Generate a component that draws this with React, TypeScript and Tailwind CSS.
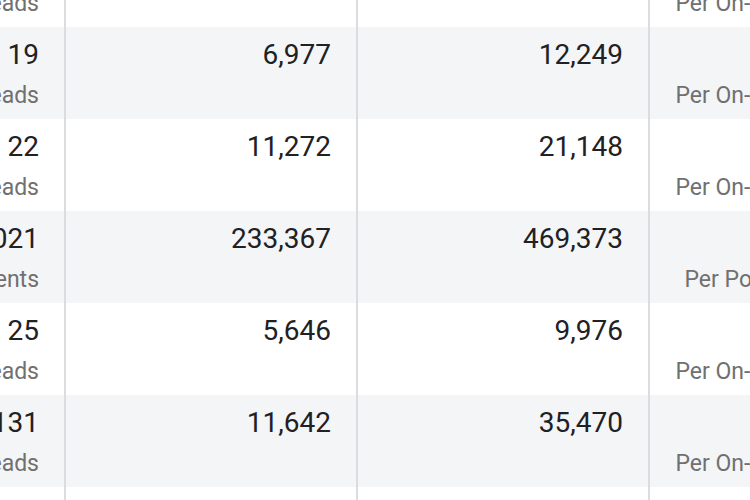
import React from "react";

type Row = { a: string; aLabel: string; b: string; c: string; d: string; dLabel: string };

const rows: Row[] = [
  { a: "18", aLabel: "On-Facebook Leads", b: "4,210", c: "8,733", d: "$0.00", dLabel: "Per On-Facebook Lead" },
  { a: "19", aLabel: "On-Facebook Leads", b: "6,977", c: "12,249", d: "$0.00", dLabel: "Per On-Facebook Lead" },
  { a: "22", aLabel: "On-Facebook Leads", b: "11,272", c: "21,148", d: "$0.00", dLabel: "Per On-Facebook Lead" },
  { a: "2021", aLabel: "Post Engagements", b: "233,367", c: "469,373", d: "$0.00", dLabel: "Per Post Engagement" },
  { a: "25", aLabel: "On-Facebook Leads", b: "5,646", c: "9,976", d: "$0.00", dLabel: "Per On-Facebook Lead" },
  { a: "1131", aLabel: "On-Facebook Leads", b: "11,642", c: "35,470", d: "$0.00", dLabel: "Per On-Facebook Lead" },
  { a: "20", aLabel: "On-Facebook Leads", b: "7,105", c: "13,902", d: "$0.00", dLabel: "Per On-Facebook Lead" },
];

function Cell({ top, bottom, className }: { top?: string; bottom?: string; className: string }) {
  return (
    <div className={`flex flex-col items-end justify-start whitespace-nowrap pt-[12px] pr-[25px] ${className}`}>
      <div className="flex justify-end w-full h-[32px] text-[28px] leading-[32px] text-[#202124]">{top}</div>
      <div className="flex justify-end w-full mt-[11px] h-[28px] text-[23px] leading-[28px] text-[#707070]">{bottom}</div>
    </div>
  );
}

export default function App() {
  return (
    <div
      className="w-[750px] h-[500px] overflow-hidden bg-white"
      style={{ fontFamily: "Roboto, 'Liberation Sans', sans-serif" }}
    >
      <div className="mt-[-65px] flex flex-col">
        {rows.map((r, i) => (
          <div
            key={i}
            className={`grid grid-cols-[66px_292px_292px_281px] h-[92px] ${i % 2 === 1 ? "bg-[#f4f5f7]" : "bg-white"}`}
          >
            <Cell top={r.a} bottom={r.aLabel} className="border-r-2 border-[#dadce0]" />
            <Cell top={r.b} className="border-r-2 border-[#dadce0]" />
            <Cell top={r.c} className="border-r-2 border-[#dadce0]" />
            <Cell top={r.d} bottom={r.dLabel} className="" />
          </div>
        ))}
      </div>
    </div>
  );
}
